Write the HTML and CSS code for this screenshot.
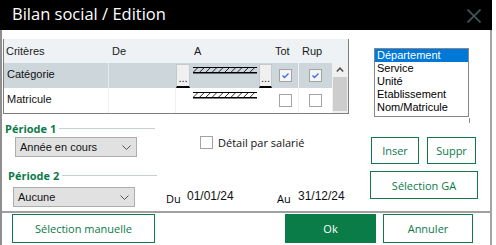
FILE: index.html
```html
<!DOCTYPE html>
<html lang="fr">
<head>
<meta charset="utf-8">
<title>Bilan social / Edition</title>
<link rel="stylesheet" href="styles.css">
</head>
<body>
<div class="window">
  <div class="titlebar">
    <span class="title">Bilan social / Edition</span>
    <svg class="close" width="14" height="14" viewBox="0 0 14 14"><path d="M0.5 0.5L13.5 13.5M13.5 0.5L0.5 13.5" stroke="#43585b" stroke-width="1.6"/></svg>
  </div>
  <div class="body">
    <div class="main">
      <div class="left">
        <div class="grid">
          <div class="th c-crit">Critères</div>
          <div class="th c-de">De</div>
          <div class="th"></div>
          <div class="th c-a">A</div>
          <div class="th"></div>
          <div class="th c-tot">Tot</div>
          <div class="th c-rup">Rup</div>
          <div class="th"></div>

          <div class="td sel name">Catégorie</div>
          <div class="td sel div-light"></div>
          <div class="td sel"><div class="dots">...</div></div>
          <div class="td sel"><svg class="hatch" width="64" height="7" viewBox="0 0 64 7"><path d="M0 0.5H64" stroke="#000" stroke-width="1"/><path d="M0 5.75H64" stroke="#000" stroke-width="1.5"/><path d="M0.5 5L4.5 1M6.8 5L10.8 1M13.1 5L17.1 1M19.4 5L23.4 1M25.7 5L29.7 1M32 5L36 1M38.3 5L42.3 1M44.6 5L48.6 1M50.9 5L54.9 1M57.2 5L61.2 1" stroke="#111" stroke-width="0.9" fill="none"/></svg></div>
          <div class="td sel"><div class="dots dots2">...</div></div>
          <div class="td sel center"><span class="cb checked"><svg width="11" height="11" viewBox="0 0 11 11"><path d="M2.5 5.5L4.5 7.5L8.5 3.5" fill="none" stroke="#3f6fd8" stroke-width="1.4"/></svg></span></div>
          <div class="td sel center div-white"><span class="cb checked"><svg width="11" height="11" viewBox="0 0 11 11"><path d="M2.5 5.5L4.5 7.5L8.5 3.5" fill="none" stroke="#3f6fd8" stroke-width="1.4"/></svg></span></div>
          <div class="scroll">
            <div class="arrow"><svg width="8" height="5" viewBox="0 0 8 5"><path d="M0.8 4.5L4 1.2L7.2 4.5" fill="none" stroke="#505050" stroke-width="1.5"/></svg></div>
            <div class="thumb"></div>
          </div>

          <div class="td name">Matricule</div>
          <div class="td div-faint"></div>
          <div class="td div-faint"></div>
          <div class="td"><svg class="hatch" width="64" height="7" viewBox="0 0 64 7"><path d="M0 0.5H64" stroke="#000" stroke-width="1"/><path d="M0 5.75H64" stroke="#000" stroke-width="1.5"/><path d="M0.5 5L4.5 1M6.8 5L10.8 1M13.1 5L17.1 1M19.4 5L23.4 1M25.7 5L29.7 1M32 5L36 1M38.3 5L42.3 1M44.6 5L48.6 1M50.9 5L54.9 1M57.2 5L61.2 1" stroke="#111" stroke-width="0.9" fill="none"/></svg></div>
          <div class="td"></div>
          <div class="td center"><span class="cb"></span></div>
          <div class="td center div-faint"><span class="cb"></span></div>
        </div>

        <div class="phead p1">
          <span class="plabel">Période 1</span>
          <span class="pline"></span>
        </div>
        <div class="prow1">
          <div class="select s1"><span>Année en cours</span><svg width="9" height="5" viewBox="0 0 9 5"><path d="M0.5 0.5L4.5 4.5L8.5 0.5" fill="none" stroke="#555" stroke-width="1"/></svg></div>
          <div class="detail"><span class="cb"></span><span class="dtext">Détail par salarié</span></div>
        </div>

        <div class="phead p2">
          <span class="plabel">Période 2</span>
          <span class="pline l2"></span>
        </div>
        <div class="prow2">
          <div class="select s2"><span>Aucune</span><svg width="9" height="5" viewBox="0 0 9 5"><path d="M0.5 0.5L4.5 4.5L8.5 0.5" fill="none" stroke="#555" stroke-width="1"/></svg></div>
          <span class="dlab du">Du</span>
          <span class="date">01/01/24</span>
          <span class="dlab">Au</span>
          <span class="date last">31/12/24</span>
        </div>
      </div>

      <div class="right">
        <div class="list">
          <div class="item selected">Département</div>
          <div class="item">Service</div>
          <div class="item">Unité</div>
          <div class="item">Etablissement</div>
          <div class="item">Nom/Matricule</div>
        </div>
        <div class="tick"></div>
        <div class="btnrow">
          <div class="btn b-inser">Inser</div>
          <div class="btn b-suppr">Suppr</div>
        </div>
        <div class="btn b-ga">Sélection GA</div>
      </div>
    </div>
    <div class="sep"></div>
    <div class="footer">
      <div class="btn b-man">Sélection manuelle</div>
      <div class="btn primary b-ok">Ok</div>
      <div class="btn b-ann">Annuler</div>
    </div>
  </div>
</div>
</body>
</html>
```

FILE: styles.css
```css
* { box-sizing: border-box; }
html, body { margin: 0; padding: 0; background: #fff; }
body { width: 496px; height: 245px; overflow: hidden; font-family: "Liberation Sans", Arial, sans-serif; color: #111; }

.window { width: 492px; }

.titlebar {
  height: 30px;
  background: #000;
  display: flex;
  align-items: flex-start;
  padding-left: 12px;
}
.title {
  font-family: "Open Sans", "Noto Sans", sans-serif;
  font-size: 16.5px;
  line-height: 22px;
  margin-top: 3px;
  color: #fff;
}
.close { margin-left: auto; margin-right: 11px; margin-top: 9px; }

.body {
  height: 215px;
  border-left: 2px solid #8f8f8f;
  border-right: 2px solid #a3a3a3;
}
.main { display: flex; }
.left { width: 363px; flex-shrink: 0; }
.right { flex: 1; }

/* criteria grid */
.grid {
  margin: 9px 0 0 1px;
  width: 346px;
  border: 1px solid #7d7d7d;
  border-top: 0;
  display: grid;
  grid-template-columns: 104px 67px 15px 68px 14px 26px 34px 16px;
  grid-template-rows: 24px 25px 25px;
  font-size: 11px;
}
.th { background: #eef2f4; line-height: 24px; color: #1a1a1a; }
.c-crit { padding-left: 2px; }
.c-de { padding-left: 4px; }
.c-a { padding-left: 4px; }
.c-tot { padding-left: 3px; }
.c-rup { padding-left: 4px; }

.td { background: #fff; }
.td.sel { background: #cdd6db; }
.name { padding-left: 3px; line-height: 22px; }
.div-light { border-left: 1px solid #e4eaed; }
.div-white { border-left: 1px solid #f2f5f6; }
.div-faint { border-left: 1px solid #f0f0f0; }
.center { display: flex; align-items: center; justify-content: center; }

.dots {
  margin: 1px 0 0 1px;
  width: 14px;
  height: 24px;
  background: #f0f0f0;
  border: 1px solid #c9c9c9;
  border-bottom: 2px solid #000;
  font-size: 11px;
  line-height: 11px;
  display: flex;
  align-items: flex-end;
  justify-content: center;
  padding-bottom: 2px;
  color: #222;
}
.dots2 { width: 13px; }

.hatch { display: block; margin: 4px 0 0 3px; }

.cb {
  display: inline-flex;
  align-items: center;
  justify-content: center;
  flex-shrink: 0;
  width: 13px;
  height: 13px;
  border: 1px solid #a3a3a3;
  background: #fff;
}
.cb.checked { background: #f3f5f8; }

.scroll {
  grid-column: 8;
  grid-row: 2 / span 2;
  background: #f0f0f0;
  display: flex;
  flex-direction: column;
}
.arrow { height: 14px; display: flex; justify-content: center; align-items: center; padding-bottom: 2px; }
.thumb { margin: 0 1px; height: 34px; background: #cdcdcd; }

/* periods */
.phead { display: flex; align-items: center; height: 12px; }
.p1 { margin-top: 8px; padding-left: 3px; }
.p2 { margin-top: 12px; padding-left: 6px; }
.plabel {
  font-family: "Open Sans", "Noto Sans", sans-serif;
  font-weight: 700;
  font-size: 11px;
  color: #0b7a48;
}
.pline { width: 96px; height: 1px; background: #c6cfd1; margin-left: 3px; }
.pline.l2 { width: 95px; }

.prow1 { display: flex; align-items: flex-start; margin-top: 3px; }
.prow2 { display: flex; align-items: center; margin-top: 6px; }
.prow1 > *, .prow2 > * { flex-shrink: 0; }

.select {
  width: 122px;
  height: 20px;
  border: 1px solid #adadad;
  background: #e1e1e1;
  display: flex;
  align-items: center;
  justify-content: space-between;
  padding: 0 5px 0 4px;
  font-size: 11px;
  color: #111;
}
.s1 { margin-left: 13px; }
.s2 { margin-left: 11px; }

.detail { display: flex; align-items: center; margin-left: 63px; margin-top: -1px; height: 13px; }
.dtext {
  margin-left: 5px;
  font-family: "Open Sans", "Noto Sans", sans-serif;
  font-size: 11px;
  color: #111;
}

.dlab {
  width: 21px;
  font-family: "Open Sans", "Noto Sans", sans-serif;
  font-size: 11px;
  color: #000;
  padding-top: 2px;
}
.du { margin-left: 31px; }
.date { width: 90px; font-size: 12px; color: #111; padding-bottom: 2px; }
.date.last { width: auto; }

/* right column */
.list {
  margin: 18px 0 0 9px;
  width: 95px;
  border: 1px solid #828790;
  padding-bottom: 2px;
  font-size: 11px;
}
.item { line-height: 13px; padding-left: 2px; color: #000; }
.item.selected { background: #0078d7; color: #fff; }
.tick { width: 1px; height: 5px; background: #8a8a8a; margin: 1px 0 0 104px; }

.btn {
  display: flex;
  align-items: center;
  justify-content: center;
  flex-shrink: 0;
  border: 1px solid #0d7a4a;
  background: #fff;
  color: #0b7a48;
  font-family: "Open Sans", "Noto Sans", sans-serif;
  font-size: 11px;
}
.btnrow { display: flex; gap: 8px; margin: 14px 0 0 6px; }
.b-inser { width: 48px; height: 27px; }
.b-suppr { width: 49px; height: 27px; }
.b-ga { width: 108px; height: 28px; margin: 7px 0 0 5px; }

.sep { height: 2px; background: #a0a0a0; margin-top: 4px; }

.footer { display: flex; padding: 0 17px 0 10px; margin-top: 1px; }
.footer .btn { height: 29px; }
.b-man { width: 143px; }
.b-ok { width: 91px; margin-left: auto; }
.b-ann { width: 90px; margin-left: 7px; }
.btn.primary { background: #0a7c48; color: #fff; border-color: #0a7c48; }
```
